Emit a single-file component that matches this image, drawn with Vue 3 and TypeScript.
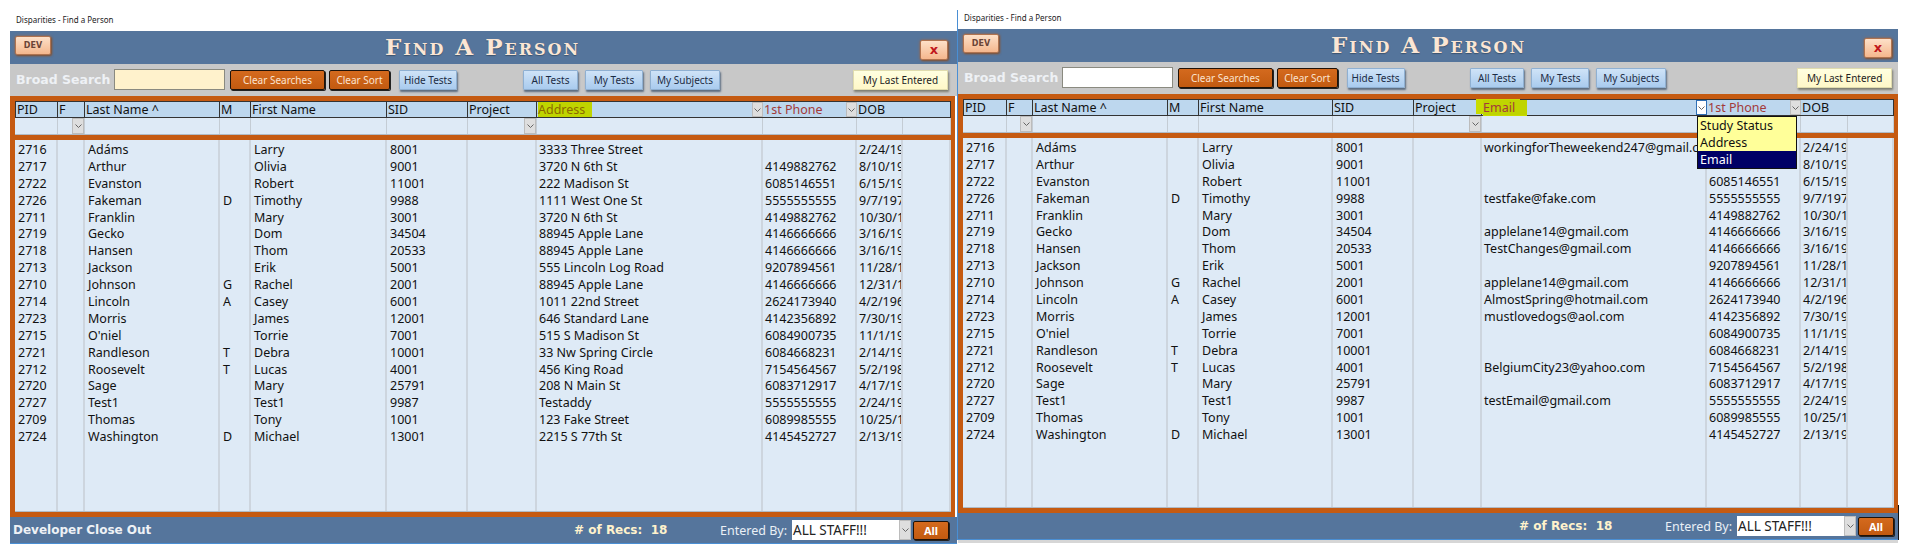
<template>
  <div class="page">
    <section v-for="win in windows" :key="win.id" class="window" :class="win.id">
      <div class="caption">Disparities - Find a Person</div>
      <header class="title-bar">
        <button class="peach dev">DEV</button>
        <h1>Find A Person</h1>
        <button class="peach close">x</button>
      </header>
      <div class="search-bar">
        <span class="broad">Broad Search</span>
        <input class="broad-input" :class="{ filled: win.id === 'left' }" />
        <button class="orange wide">Clear Searches</button>
        <button class="orange sort">Clear Sort</button>
        <button class="blue hide">Hide Tests</button>
        <button class="blue all-tests">All Tests</button>
        <button class="blue my-tests">My Tests</button>
        <button class="blue my-subjects">My Subjects</button>
        <button class="cream">My Last Entered</button>
      </div>
      <div class="frame">
        <div class="head">
          <div v-for="col in win.columns.slice(0, 10)" :key="col.key" class="head-cell" :class="col.headClass">
            <span :class="{ mark: col.mark }">{{ col.label }}</span>
            <i v-if="col.pick" class="pick" :class="{ open: col.open }"><svg width="7" height="4" viewBox="0 0 7 4"><path d="M0.5 0.5 3.5 3.5 6.5 0.5" /></svg></i>
          </div>
        </div>
        <div class="filter">
          <div v-for="col in win.columns" :key="col.key" class="filter-cell">
            <i v-if="col.filter" class="pick flat"><svg width="7" height="4" viewBox="0 0 7 4"><path d="M0.5 0.5 3.5 3.5 6.5 0.5" /></svg></i>
          </div>
        </div>
        <div v-if="win.id === 'right'" class="menu">
          <div>Study Status</div>
          <div>Address</div>
          <div class="picked">Email</div>
        </div>
        <div class="body">
          <div v-for="col in win.columns" :key="col.key" class="body-col" :class="col.key">
            <div v-for="row in people" :key="row.pid" class="cell">{{ row[col.key] }}</div>
          </div>
        </div>
      </div>
      <footer class="foot">
        <span class="closeout">{{ win.id === 'left' ? 'Developer Close Out' : '' }}</span>
        <span class="recs">#&nbsp;of Recs:&nbsp; 18</span>
        <span class="entered">Entered By:</span>
        <div class="staff">ALL STAFF!!!<i class="pick flat tall"><svg width="7" height="4" viewBox="0 0 7 4"><path d="M0.5 0.5 3.5 3.5 6.5 0.5" /></svg></i></div>
        <button class="orange all">All</button>
      </footer>
    </section>
  </div>
</template>

<script setup lang="ts">
interface Person {
  pid: string
  f: string
  last: string
  m: string
  first: string
  sid: string
  project: string
  address: string
  email: string
  phone: string
  dob: string
  end: string
}

interface Column {
  key: keyof Person
  label: string
  headClass?: string
  mark?: boolean
  pick?: boolean
  open?: boolean
  filter?: boolean
}

const rows: string[] = [
  '2716|Adáms||Larry|8001|3333 Three Street|workingforTheweekend247@gmail.com||2/24/19',
  '2717|Arthur||Olivia|9001|3720 N 6th St||4149882762|8/10/19',
  '2722|Evanston||Robert|11001|222 Madison St||6085146551|6/15/19',
  '2726|Fakeman|D|Timothy|9988|1111 West One St|testfake@fake.com|5555555555|9/7/197',
  '2711|Franklin||Mary|3001|3720 N 6th St||4149882762|10/30/1',
  '2719|Gecko||Dom|34504|88945 Apple Lane|applelane14@gmail.com|4146666666|3/16/19',
  '2718|Hansen||Thom|20533|88945 Apple Lane|TestChanges@gmail.com|4146666666|3/16/19',
  '2713|Jackson||Erik|5001|555 Lincoln Log Road||9207894561|11/28/1',
  '2710|Johnson|G|Rachel|2001|88945 Apple Lane|applelane14@gmail.com|4146666666|12/31/1',
  '2714|Lincoln|A|Casey|6001|1011 22nd Street|AlmostSpring@hotmail.com|2624173940|4/2/196',
  '2723|Morris||James|12001|646 Standard Lane|mustlovedogs@aol.com|4142356892|7/30/19',
  "2715|O'niel||Torrie|7001|515 S Madison St||6084900735|11/1/19",
  '2721|Randleson|T|Debra|10001|33 Nw Spring Circle||6084668231|2/14/19',
  '2712|Roosevelt|T|Lucas|4001|456 King Road|BelgiumCity23@yahoo.com|7154564567|5/2/198',
  '2720|Sage||Mary|25791|208 N Main St||6083712917|4/17/19',
  '2727|Test1||Test1|9987|Testaddy|testEmail@gmail.com|5555555555|2/24/19',
  '2709|Thomas||Tony|1001|123 Fake Street||6089985555|10/25/1',
  '2724|Washington|D|Michael|13001|2215 S 77th St||4145452727|2/13/19'
]

const people: Person[] = rows.map((line) => {
  const [pid, last, m, first, sid, address, email, phone, dob] = line.split('|')
  return { pid, f: '', last, m, first, sid, project: '', address, email, phone, dob, end: '' }
})

function columnsFor(swap: Column): Column[] {
  return [
    { key: 'pid', label: 'PID' },
    { key: 'f', label: 'F', filter: true },
    { key: 'last', label: 'Last Name ^' },
    { key: 'm', label: 'M' },
    { key: 'first', label: 'First Name' },
    { key: 'sid', label: 'SID' },
    { key: 'project', label: 'Project', filter: true },
    swap,
    { key: 'phone', label: '1st Phone', headClass: 'red', pick: true },
    { key: 'dob', label: 'DOB' },
    { key: 'end', label: '' }
  ]
}

const windows = [
  {
    id: 'left',
    columns: columnsFor({ key: 'address', label: 'Address', headClass: 'olive', mark: true, pick: true })
  },
  {
    id: 'right',
    columns: columnsFor({ key: 'email', label: 'Email', headClass: 'red', mark: true, pick: true, open: true })
  }
]
</script>

<style>
body {
  background: #fff;
}
</style>

<style scoped>
.page {
  display: flex;
  align-items: flex-start;
  width: 1918px;
  height: 555px;
  overflow: hidden;
  font-family: "Noto Sans", "DejaVu Sans", sans-serif;
  font-size: 12.5px;
  color: #111;
}

.window {
  position: relative;
  display: flex;
  flex-direction: column;
  box-sizing: border-box;
}

.window.left {
  width: 947px;
  margin-left: 10px;
  padding-top: 13px;
}

.window.right {
  width: 941px;
  margin-top: 10px;
  padding-top: 1px;
  border-left: 1px solid #4a8fd4;
}

.window.right::after {
  content: '';
  position: absolute;
  right: -1px;
  bottom: 0;
  width: 1px;
  height: 35px;
  background: #111;
}

.caption {
  height: 18px;
  padding-left: 6px;
  font-size: 8px;
  line-height: 14px;
  color: #222;
}

.title-bar {
  position: relative;
  display: flex;
  align-items: center;
  justify-content: space-between;
  height: 33px;
  padding: 0 9px 0 5px;
  background: #55759c;
}

.right .title-bar {
  padding-right: 6px;
}

.title-bar h1 {
  margin: 0;
  position: absolute;
  left: 375px;
  top: 1px;
  font-family: "DejaVu Serif", "Liberation Serif", serif;
  font-variant: small-caps;
  font-weight: 700;
  font-size: 23px;
  line-height: 30px;
  letter-spacing: 2px;
  color: #fbe6d4;
  text-shadow: 0 1px 1px #3c536f;
}

.right .title-bar h1 {
  left: 373px;
}

button {
  font-family: inherit;
  padding: 0;
  cursor: pointer;
}

.peach {
  height: 19px;
  border: 1px solid #b0734f;
  border-radius: 2px;
  background: linear-gradient(#fde0c8, #f5b78d);
  box-shadow: 1px 1px 2px #7d5236, 0 0 3px #a66a44;
  color: #6a4436;
  font-weight: 700;
}

.dev {
  width: 36px;
  font-size: 8px;
  font-family: "DejaVu Sans", sans-serif;
  margin-top: -5px;
}

.close {
  width: 28px;
  margin-top: 4px;
  height: 20px;
  color: #c0161c;
  font-size: 13px;
  line-height: 14px;
  font-family: "DejaVu Sans", sans-serif;
}

.search-bar {
  display: flex;
  align-items: center;
  height: 32px;
  padding: 0 6px;
  background: #c8c8c8;
}

.broad {
  width: 98px;
  flex: none;
  color: #eef1f5;
  font-family: "DejaVu Sans", sans-serif;
  font-weight: 700;
  font-size: 12.5px;
  white-space: nowrap;
  margin-top: -2px;
}

.broad-input {
  box-sizing: border-box;
  width: 111px;
  height: 21px;
  border: 1px solid #8a8a80;
  margin: -1px 5px 0 0;
  background: #fff;
  padding: 0;
}

.broad-input.filled {
  background: #fff2cc;
}

.orange {
  height: 20px;
  border: 1px solid #1f1208;
  border-radius: 2px;
  background: linear-gradient(#d46a1e, #c25a10);
  color: #fbe3cf;
  font-size: 10px;
  box-shadow: 1px 1px 0 #222;
}

.wide {
  width: 95px;
  margin-right: 4px;
}

.sort {
  width: 61px;
  margin-right: 9px;
}

.blue {
  height: 20px;
  border: 1px solid #8fb0d2;
  border-radius: 1px;
  background: linear-gradient(#cfe3f7, #a9cbee);
  color: #1c2c44;
  font-size: 10px;
  box-shadow: 1px 2px 2px #5b6c80;
}

.hide {
  width: 58px;
  margin-right: 66px;
}

.all-tests {
  width: 55px;
  margin-right: 7px;
}

.my-tests {
  width: 58px;
  margin-right: 7px;
}

.my-subjects {
  width: 70px;
  margin-right: 133px;
}

.right .hide {
  margin-right: 65px;
}

.right .my-subjects {
  margin-right: 131px;
}

.cream {
  width: 95px;
  height: 20px;
  border: 1px solid #e0dcae;
  background: linear-gradient(#ffffe0, #fff8c8);
  color: #222;
  font-size: 10px;
  box-shadow: 1px 2px 2px #7d7d70;
}

.frame {
  position: relative;
  display: flex;
  flex-direction: column;
  flex: none;
  height: 421px;
  box-sizing: border-box;
  margin-right: 2px;
  padding: 5px 4px 5px 5px;
  background: #c55a11;
}

.right .frame {
  height: 419px;
  margin-right: 0;
}

.head,
.filter,
.body {
  display: grid;
  grid-template-columns: var(--cols);
}

.left {
  --cols: 43px 27px 135px 31px 136px 81px 69px 226px 94px 46px 48px;
}

.right {
  --cols: 44px 26px 135px 31px 134px 81px 68px 225px 94px 47px 46px;
}

.head {
  height: 17px;
}

.head-cell {
  position: relative;
  box-sizing: border-box;
  height: 17px;
  padding-left: 1px;
  border: 1px solid #333;
  border-left-width: 0;
  background: #bdd7ee;
  line-height: 15px;
  white-space: nowrap;
}

.head-cell:first-child {
  border-left-width: 1px;
}

.head-cell:last-child {
  grid-column: span 2;
}

.head-cell.olive {
  color: #8c6a00;
}

.head-cell.red {
  color: #a33a3a;
}

.mark {
  display: inline-block;
  width: 54px;
  background: #bfd400;
}

.right .mark {
  width: 44px;
  box-shadow: -7px -1px 0 #c8dc00, 0 1px 0 #c8dc00;
}

.pick {
  position: absolute;
  right: -1px;
  top: 0;
  display: flex;
  align-items: center;
  justify-content: center;
  box-sizing: border-box;
  width: 11px;
  height: 15px;
  background: #dedede;
  border: 1px solid #bcbcbc;
}

.pick.open {
  background: #fff;
  border-color: #2f6fb5;
}

.pick path {
  fill: none;
  stroke: #666;
  stroke-width: 1;
}

.pick.flat {
  top: 0;
  right: 0;
  width: 12px;
  height: 16px;
}

.pick.tall {
  height: 100%;
}

.filter {
  height: 17px;
  box-sizing: border-box;
  background: #deeaf6;
  border-bottom: 1px solid #b0bbc6;
}

.filter-cell {
  position: relative;
  box-sizing: border-box;
  border-right: 1px solid #c4ccd4;
}

.menu {
  position: absolute;
  z-index: 2;
  left: 739px;
  top: 22px;
  width: 100px;
  box-sizing: border-box;
  border: 1px solid #111;
  background: #ffff99;
  line-height: 17px;
  color: #111;
}

.menu div {
  padding-left: 2px;
}

.menu .picked {
  background: #000066;
  color: #fff;
}

.body {
  flex: 1;
  min-height: 0;
  margin-top: 5px;
  background: #deeaf6;
  border-bottom: 1px solid #b0bbc6;
}

.body-col {
  box-sizing: border-box;
  overflow: hidden;
  padding: 1px 0 0 3px;
  border-right: 2px solid #cdd5de;
}

.body-col.address,
.body-col.email,
.body-col.phone,
.body-col.dob {
  padding-left: 2px;
}

.cell {
  height: 16.9px;
  line-height: 17px;
  white-space: nowrap;
}

.foot {
  display: flex;
  align-items: center;
  height: 26px;
  padding: 0 4px 0 3px;
  background: #55759c;
  border-bottom: 1px solid #4a8fd4;
}

.right .foot {
  box-shadow: 0 3px 0 #d6d6d6;
}

.closeout {
  width: 561px;
  flex: none;
  color: #eef1f5;
  font-family: "DejaVu Sans", sans-serif;
  font-weight: 700;
  font-size: 12px;
}

.right .closeout {
  width: 558px;
}

.recs {
  width: 146px;
  flex: none;
  color: #fff2cc;
  font-family: "DejaVu Sans", sans-serif;
  font-weight: 700;
  font-size: 12px;
}

.entered {
  width: 72px;
  flex: none;
  color: #eaf0f6;
  font-size: 12.5px;
  white-space: nowrap;
}

.staff {
  position: relative;
  box-sizing: border-box;
  width: 119px;
  height: 20px;
  margin-right: 2px;
  padding-left: 1px;
  background: #fff;
  font-size: 13.5px;
  line-height: 20px;
  color: #222;
}

.all {
  width: 36px;
  height: 19px;
  font-size: 11px;
  font-weight: 700;
  color: #fff;
}
</style>
